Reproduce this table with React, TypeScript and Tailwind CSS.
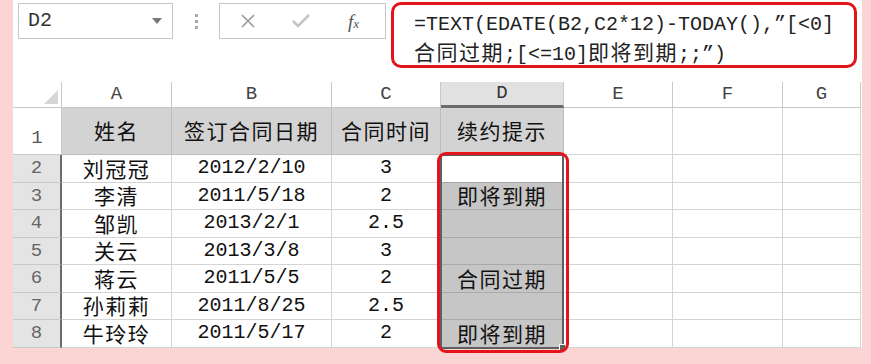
import React from 'react';

const mono = "font-['Liberation_Mono','Noto_Sans_CJK_SC',monospace]";
const cjk = "font-['Noto_Sans_CJK_SC',sans-serif]";

const cols = ['A', 'B', 'C', 'D', 'E', 'F', 'G'];

const rows = [
  { n: 2, name: '刘冠冠', date: '2012/2/10', years: '3', tip: '' },
  { n: 3, name: '李清', date: '2011/5/18', years: '2', tip: '即将到期' },
  { n: 4, name: '邹凯', date: '2013/2/1', years: '2.5', tip: '' },
  { n: 5, name: '关云', date: '2013/3/8', years: '3', tip: '' },
  { n: 6, name: '蒋云', date: '2011/5/5', years: '2', tip: '合同过期' },
  { n: 7, name: '孙莉莉', date: '2011/8/25', years: '2.5', tip: '' },
  { n: 8, name: '牛玲玲', date: '2011/5/17', years: '2', tip: '即将到期' },
];

function FormulaBar() {
  return (
    <div className="flex items-start h-[82px] pl-[5px] pt-[3px]">
      {/* name box */}
      <div className="w-[155px] h-[36px] border border-[#c6c6c6] flex items-center justify-between pl-[9px] pr-[10px]">
        <span className={`${mono} text-[20px] text-[#333]`}>D2</span>
        <svg width="10" height="6" viewBox="0 0 10 6"><path d="M0 0h10L5 6z" fill="#777" /></svg>
      </div>
      <div className="w-[46px] h-[36px] flex flex-col items-center justify-center gap-[3px]">
        <span className="w-[3px] h-[3px] bg-[#aaa]" />
        <span className="w-[3px] h-[3px] bg-[#aaa]" />
        <span className="w-[3px] h-[3px] bg-[#aaa]" />
      </div>
      <div className="w-[167px] h-[36px] border border-[#c6c6c6] flex items-center pl-[20px]">
        <svg width="16" height="16" viewBox="0 0 16 16"><path d="M2 2L14 14M14 2L2 14" stroke="#9a9a9a" strokeWidth="1.6" /></svg>
        <svg className="ml-[36px]" width="18" height="16" viewBox="0 0 18 16"><path d="M1 8L6 13L17 2" stroke="#c4c4c4" strokeWidth="2.5" fill="none" /></svg>
        <span className="ml-[38px] font-['Liberation_Serif',serif] italic text-[19px] text-[#555] leading-none">
          f<span className="text-[13px]">x</span>
        </span>
      </div>
      {/* formula */}
      <div className="ml-[5px] -mt-[1px] w-[466px] h-[66px] border-[3px] border-[#e3141b] rounded-[10px] pl-[20px] pt-[6px] bg-white">
        <div className={`${mono} text-[20px] leading-[27px] text-[#222] whitespace-nowrap`}>
          =TEXT(EDATE(B2,C2*12)-TODAY(),”[&lt;0]
        </div>
        <div className={`${mono} text-[20px] leading-[27px] text-[#222] whitespace-nowrap`}>
          <span className={`${cjk} text-[21px] tracking-[1.5px]`}>合同过期</span>;[&lt;=10]<span className={`${cjk} text-[21px] tracking-[1.5px]`}>即将到期</span>;;”)
        </div>
      </div>
    </div>
  );
}

function Sheet() {
  const cellBase = 'border-r border-b border-[#d4d4d4] flex items-center justify-center';
  const rowHead = 'border-r-2 border-[#6b6b6b] border-b border-b-[#c8c8c8] bg-[#e4e4e4] flex items-center justify-center';
  return (
    <div className="relative grid grid-cols-[49px_110px_160px_109px_123px_109px_110px_78px] grid-rows-[26px_47px_repeat(7,27.5px)] text-[#111]">
      {/* column header row */}
      <div className="border-r border-b border-[#c8c8c8] flex items-end justify-end p-[3px]">
        <svg width="14" height="14" viewBox="0 0 14 14"><path d="M14 0V14H0z" fill="#d6d6d6" /></svg>
      </div>
      {cols.map((c) => (
        <div
          key={c}
          className={
            c === 'D'
              ? `bg-[#e1e1e1] border-r border-[#c8c8c8] border-b-[3px] border-b-[#6b6b6b] flex items-center justify-center ${mono} text-[19px] text-[#333]`
              : `border-r border-b border-[#c8c8c8] flex items-center justify-center ${mono} text-[19px] text-[#444]`
          }
        >
          {c}
        </div>
      ))}

      {/* row 1 */}
      <div className={`border-r border-b border-[#c8c8c8] flex items-end justify-center pb-[2px] ${mono} text-[19px] text-[#555]`}>1</div>
      {['姓名', '签订合同日期', '合同时间', '续约提示'].map((t) => (
        <div key={t} className={`bg-[#d3d3d3] border-r border-b border-[#bdbdbd] flex items-center justify-center ${cjk} text-[21px] tracking-[1.5px]`}>
          {t}
        </div>
      ))}
      <div className={cellBase} />
      <div className={cellBase} />
      <div className={cellBase} />

      {rows.map((r) => (
        <React.Fragment key={r.n}>
          <div className={`${rowHead} ${mono} text-[19px] text-[#666]`}>{r.n}</div>
          <div className={`${cellBase} ${cjk} text-[21px] tracking-[1.5px]`}>{r.name}</div>
          <div className={`${cellBase} ${mono} text-[20px]`}>{r.date}</div>
          <div className={`${cellBase} ${mono} text-[20px]`}>{r.years}</div>
          <div
            className={`${r.n === 2 ? 'bg-white' : 'bg-[#c6c6c6]'} border-r border-r-[#d4d4d4] border-b border-[#a9a9a9] flex items-center justify-center ${cjk} text-[21px] tracking-[1.5px]`}
          >
            {r.tip}
          </div>
          <div className={cellBase} />
          <div className={cellBase} />
          <div className={cellBase} />
        </React.Fragment>
      ))}

      {/* selection outline D2:D8 */}
      <div className="absolute left-[427px] top-[72px] w-[124px] h-[195px] border-2 border-[#5f5f5f] pointer-events-none" />
      <div className="absolute left-[546px] top-[262px] w-[7px] h-[7px] bg-[#5f5f5f] border border-white pointer-events-none" />
      {/* red highlight */}
      <div className="absolute left-[424px] top-[70px] w-[132px] h-[201px] border-[3px] border-[#e3141b] rounded-[9px] pointer-events-none" />
    </div>
  );
}

export default function App() {
  return (
    <div className="w-[871px] h-[364px] bg-[#fbd4d4] overflow-hidden">
      <div className="ml-[13px] w-[849px] bg-white">
        <FormulaBar />
        <Sheet />
      </div>
    </div>
  );
}
